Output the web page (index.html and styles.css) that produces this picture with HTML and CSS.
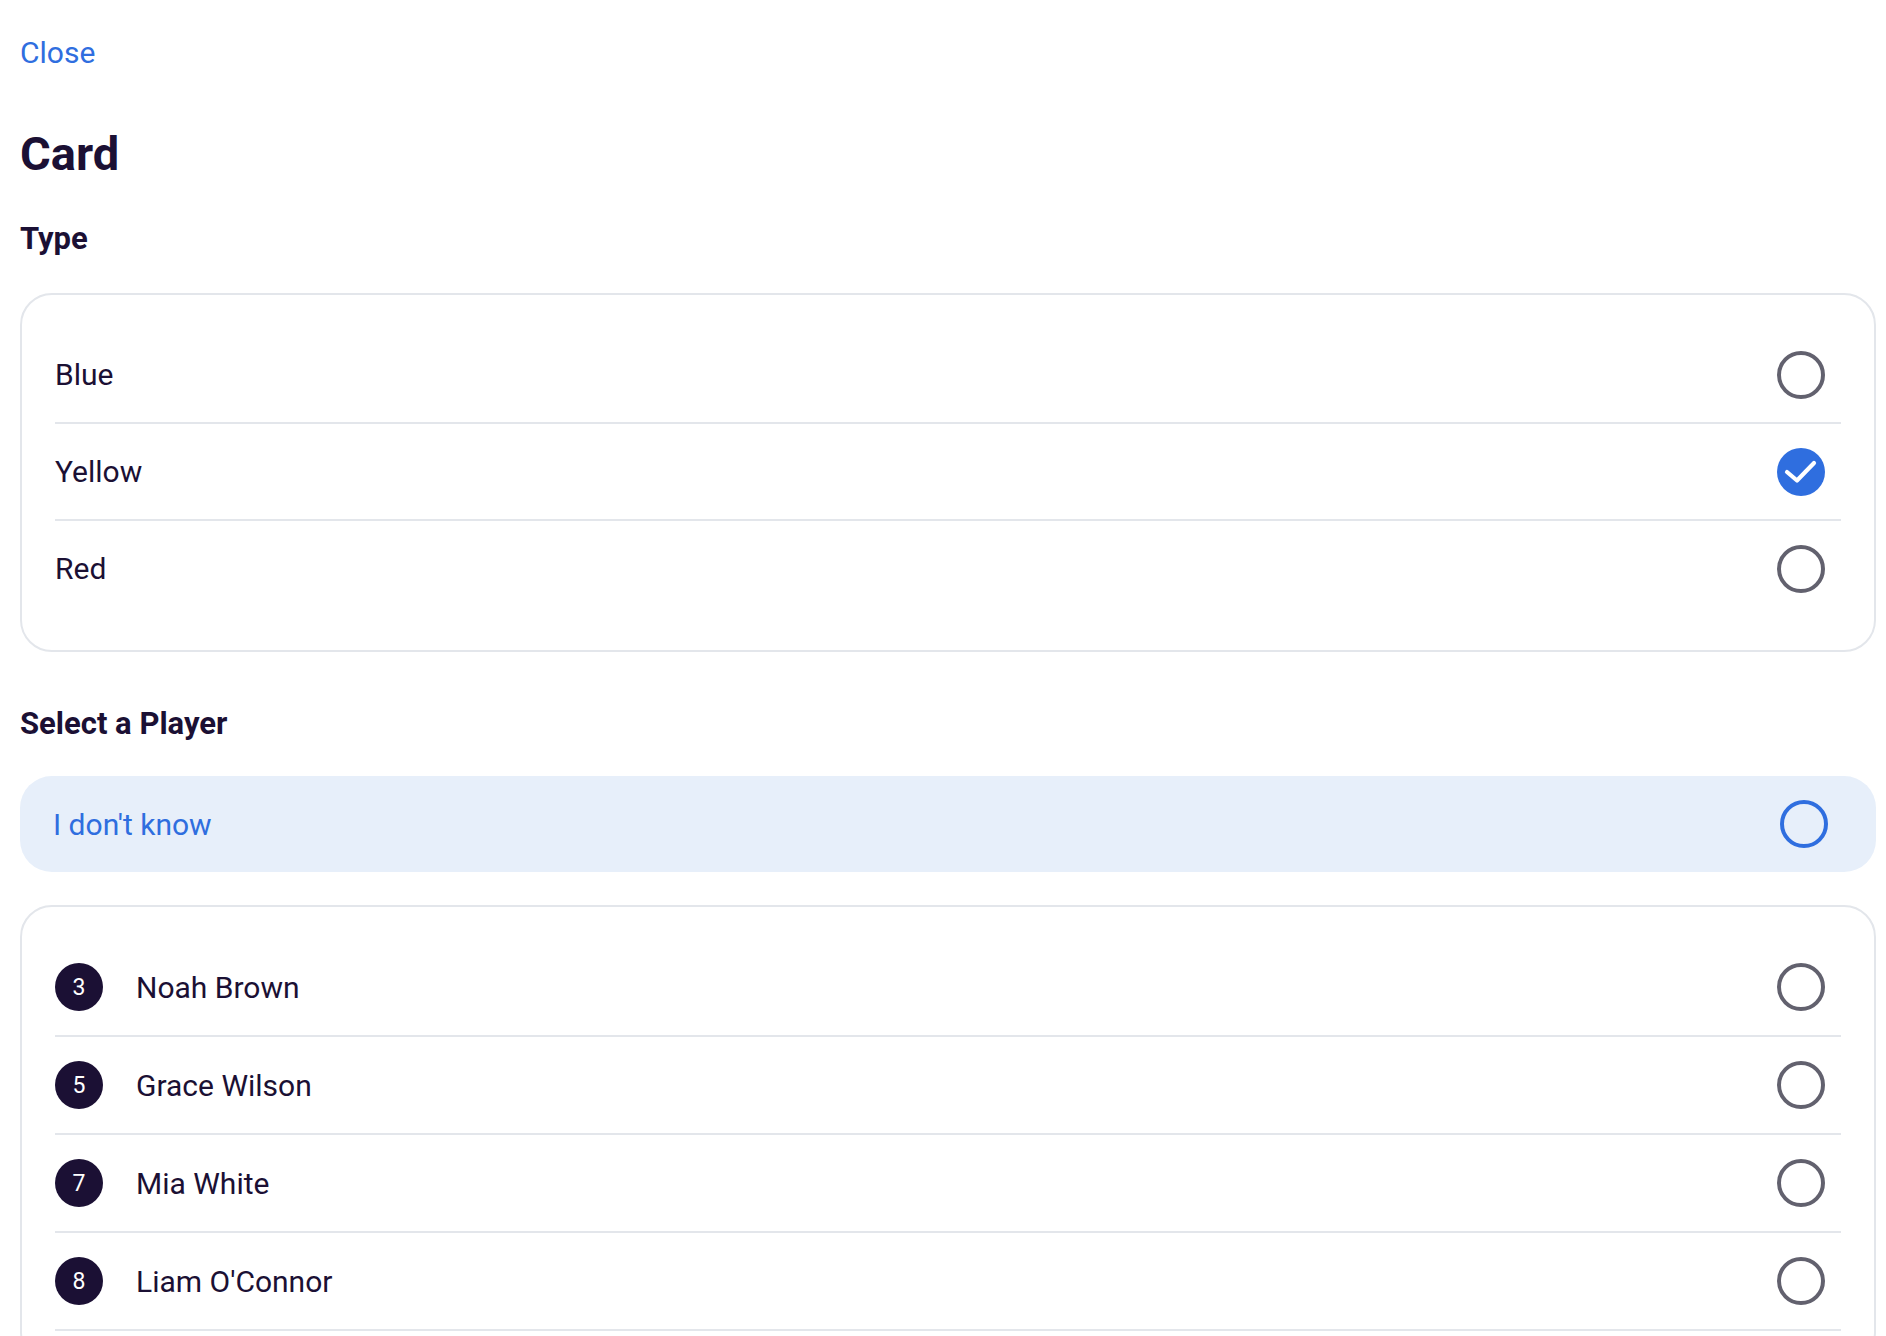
FILE: index.html
```html
<!DOCTYPE html>
<html lang="en">
<head>
    <meta charset="UTF-8">
    <meta name="viewport" content="width=device-width, initial-scale=1.0">
    <title>Card</title>
    <link rel="stylesheet" href="styles.css">
</head>
<body>
  <div class="sheet">
      <a class="close" href="#">Close</a>
      <h1 class="titulo">Card</h1>

      <h2 class="secao">Type</h2>
      <div class="lista lista-tipo">
          <label class="linha">
              <span class="nome">Blue</span>
              <svg class="radio" viewBox="0 0 48 48"><circle cx="24" cy="24" r="22" fill="none" stroke="#62616e" stroke-width="4"/></svg>
          </label>
          <label class="linha">
              <span class="nome">Yellow</span>
              <svg class="radio" viewBox="0 0 48 48"><circle cx="24" cy="24" r="24" fill="#2f6edf"/><polyline points="10,24 20,32.5 37,15" fill="none" stroke="#fff" stroke-width="4.2" stroke-linecap="round" stroke-linejoin="round"/></svg>
          </label>
          <label class="linha">
              <span class="nome">Red</span>
              <svg class="radio" viewBox="0 0 48 48"><circle cx="24" cy="24" r="22" fill="none" stroke="#62616e" stroke-width="4"/></svg>
          </label>
      </div>

      <h2 class="secao secao-jogador">Select a Player</h2>
      <label class="nao-sei">
          <span class="nome">I don't know</span>
          <svg class="radio" viewBox="0 0 48 48"><circle cx="24" cy="24" r="22" fill="none" stroke="#2f6edf" stroke-width="4"/></svg>
      </label>

      <div class="lista lista-jogadores">
          <label class="linha jogador">
              <span class="numero">3</span>
              <span class="nome">Noah Brown</span>
              <svg class="radio" viewBox="0 0 48 48"><circle cx="24" cy="24" r="22" fill="none" stroke="#62616e" stroke-width="4"/></svg>
          </label>
          <label class="linha jogador">
              <span class="numero">5</span>
              <span class="nome">Grace Wilson</span>
              <svg class="radio" viewBox="0 0 48 48"><circle cx="24" cy="24" r="22" fill="none" stroke="#62616e" stroke-width="4"/></svg>
          </label>
          <label class="linha jogador">
              <span class="numero">7</span>
              <span class="nome">Mia White</span>
              <svg class="radio" viewBox="0 0 48 48"><circle cx="24" cy="24" r="22" fill="none" stroke="#62616e" stroke-width="4"/></svg>
          </label>
          <label class="linha jogador">
              <span class="numero">8</span>
              <span class="nome">Liam O'Connor</span>
              <svg class="radio" viewBox="0 0 48 48"><circle cx="24" cy="24" r="22" fill="none" stroke="#62616e" stroke-width="4"/></svg>
          </label>
      </div>
  </div>
</body>
</html>
```

FILE: styles.css
```css
body { font-family: Roboto, "Liberation Sans", sans-serif; background-color: #fff; color: #1b1034; margin: 0; padding: 0; }
.sheet { padding: 35px 10px 40px 20px; display: flex; flex-direction: column; }
.close { font-size: 30px; line-height: 36px; color: #2f6edf; text-decoration: none; align-self: flex-start; }
.titulo { font-size: 47px; line-height: 54px; font-weight: 700; margin: 56px 0 0; }
.secao { font-size: 31px; line-height: 36px; font-weight: 700; margin: 40px 0 36px; }
.secao-jogador { margin: 54px 0 34px; }
.lista { border: 2px solid #e3e6eb; border-radius: 32px; padding: 32px 33px; }
.lista-tipo { padding-bottom: 34px; }
.linha { display: flex; align-items: center; min-height: 95px; padding-right: 16px; border-bottom: 2px solid #e3e6eb; cursor: pointer; }
.linha:last-child { border-bottom: none; }
.nome { flex-grow: 1; font-size: 30px; }
.radio { width: 48px; height: 48px; flex-shrink: 0; }
.nao-sei { display: flex; align-items: center; height: 96px; background-color: #e7effa; border-radius: 32px; padding: 0 48px 0 33px; color: #2f6edf; cursor: pointer; }
.lista-jogadores { margin-top: 33px; }
.jogador { min-height: 96px; gap: 33px; }
.lista-jogadores .jogador:last-child { border-bottom: 2px solid #e3e6eb; }
.numero { width: 48px; height: 48px; border-radius: 50%; background-color: #1b1034; color: #fff; font-size: 23px; display: flex; align-items: center; justify-content: center; flex-shrink: 0; }
```
